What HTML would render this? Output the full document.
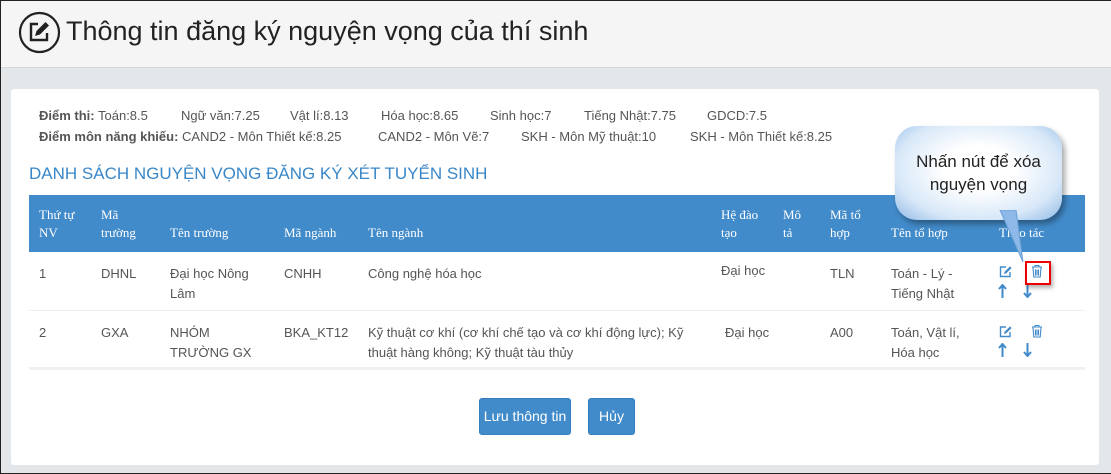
<!DOCTYPE html>
<html><head><meta charset="utf-8"><style>
*{box-sizing:border-box}
body{margin:0;width:1111px;height:474px;overflow:hidden;font-family:"Liberation Sans",sans-serif;font-size:13px;color:#555;background:#e4e7ea;position:relative}
.frame{position:absolute;left:0;top:0;width:1111px;height:474px;border:1px solid #222;border-right:none;pointer-events:none;z-index:10}
.hdr{position:absolute;left:0;top:0;width:1111px;height:68px;background:#f5f5f5;border-bottom:1px solid #d5d8db}
.hdr h1{position:absolute;left:66px;top:16px;margin:0;font-weight:normal;font-size:27px;color:#222}
.card{position:absolute;left:11px;top:89px;width:1088px;height:376px;background:#fff;border-radius:3px}
.t{position:absolute;white-space:nowrap}
.b{font-weight:bold}
table{position:absolute;left:18px;top:106px;width:1056px;border-collapse:collapse}
th{background:#428bca;color:#fff;font-family:"Liberation Serif",serif;font-weight:normal;text-align:left;vertical-align:bottom;font-size:13px;line-height:18px;padding:0 0 10px 10px;height:57px}
td{vertical-align:top;padding:12px 0 0 10px;line-height:20px;height:58px;border-bottom:1px solid #eee;color:#555}
tr:last-child td{border-bottom:3px solid #f0f0f0}
.btn{position:absolute;top:309px;height:37px;background:#428bca;border:1px solid #357ebd;border-radius:3px;color:#fff;font-size:14px;line-height:35px;text-align:center}
.ico{position:absolute;z-index:3}
</style></head><body>
<div class="hdr">
<svg style="position:absolute;left:18px;top:11px" width="43" height="43" viewBox="0 0 43 43"><circle cx="21.5" cy="21.5" r="19.5" fill="none" stroke="#222" stroke-width="2.2"/><path d="M20 13H13v16h16v-7" fill="none" stroke="#222" stroke-width="2.4"/><path d="M17 25l1.5-5 9-9 3.5 3.5-9 9z" fill="#222"/></svg>
<h1>Thông tin đăng ký nguyện vọng của thí sinh</h1></div>
<div class="card">
<div class="t" style="left:28px;top:19px"><span class="b">Điểm thi:</span> Toán:8.5</div>
<div class="t" style="left:170px;top:19px">Ngữ văn:7.25</div>
<div class="t" style="left:279px;top:19px">Vật lí:8.13</div>
<div class="t" style="left:370px;top:19px">Hóa học:8.65</div>
<div class="t" style="left:479px;top:19px">Sinh học:7</div>
<div class="t" style="left:573px;top:19px">Tiếng Nhật:7.75</div>
<div class="t" style="left:696px;top:19px">GDCD:7.5</div>
<div class="t" style="left:28px;top:40px"><span class="b">Điểm môn năng khiếu:</span> CAND2 - Môn Thiết kế:8.25</div>
<div class="t" style="left:367px;top:40px">CAND2 - Môn Vẽ:7</div>
<div class="t" style="left:510px;top:40px">SKH - Môn Mỹ thuật:10</div>
<div class="t" style="left:679px;top:40px">SKH - Môn Thiết kế:8.25</div>
<div class="t" style="left:18px;top:75px;font-size:17px;color:#3a87c8">DANH SÁCH NGUYỆN VỌNG ĐĂNG KÝ XÉT TUYỂN SINH</div>
<table>
<tr><th style="width:62px">Thứ tự<br>NV</th><th style="width:69px">Mã<br>trường</th><th style="width:114px">Tên trường</th><th style="width:84px">Mã ngành</th><th style="width:353px">Tên ngành</th><th style="width:62px">Hệ đào<br>tạo</th><th style="width:47px">Mô<br>tả</th><th style="width:61px">Mã tổ<br>hợp</th><th style="width:108px">Tên tổ hợp</th><th>Thao tác</th></tr>
<tr><td>1</td><td>DHNL</td><td>Đại học Nông<br>Lâm</td><td>CNHH</td><td>Công nghệ hóa học</td><td style="padding-top:9px">Đại học</td><td></td><td>TLN</td><td>Toán - Lý -<br>Tiếng Nhật</td><td></td></tr>
<tr><td>2</td><td>GXA</td><td>NHÓM<br>TRƯỜNG GX</td><td>BKA_KT12</td><td>Kỹ thuật cơ khí (cơ khí chế tạo và cơ khí động lực); Kỹ thuật hàng không; Kỹ thuật tàu thủy</td><td style="padding-left:14px">Đại học</td><td></td><td>A00</td><td>Toán, Vật lí,<br>Hóa học</td><td></td></tr>
</table>
<div class="btn" style="left:468px;width:92px">Lưu thông tin</div>
<div class="btn" style="left:577px;width:47px">Hủy</div>
</div>
<!-- icons rows -->
<svg class="ico" style="left:999px;top:265px" width="14" height="13" viewBox="0 0 14 13"><path d="M7 2H1.5v9.5H11V7" fill="none" stroke="#428bca" stroke-width="1.4"/><path d="M5 9l.6-2.2L11 1.4l1.6 1.6L7.2 8.4z" fill="#428bca"/></svg>
<svg class="ico" style="left:1031px;top:264px" width="12" height="14" viewBox="0 0 12 14"><path d="M1 3h10M4 3V1.5h4V3M2 3.5l.8 9.5h6.4L10 3.5M4.5 5.5v6M6 5.5v6M7.5 5.5v6" fill="none" stroke="#428bca" stroke-width="1.1"/></svg>
<svg class="ico" style="left:998px;top:284px" width="9" height="14" viewBox="0 0 9 14"><path d="M4.5 1v13M1 5l3.5-4L8 5" fill="none" stroke="#428bca" stroke-width="2"/></svg>
<svg class="ico" style="left:1023px;top:284px" width="9" height="14" viewBox="0 0 9 14"><path d="M4.5 0v13M1 9l3.5 4L8 9" fill="none" stroke="#428bca" stroke-width="2"/></svg>
<svg class="ico" style="left:999px;top:325px" width="14" height="13" viewBox="0 0 14 13"><path d="M7 2H1.5v9.5H11V7" fill="none" stroke="#428bca" stroke-width="1.4"/><path d="M5 9l.6-2.2L11 1.4l1.6 1.6L7.2 8.4z" fill="#428bca"/></svg>
<svg class="ico" style="left:1031px;top:324px" width="12" height="14" viewBox="0 0 12 14"><path d="M1 3h10M4 3V1.5h4V3M2 3.5l.8 9.5h6.4L10 3.5M4.5 5.5v6M6 5.5v6M7.5 5.5v6" fill="none" stroke="#428bca" stroke-width="1.1"/></svg>
<svg class="ico" style="left:998px;top:343px" width="9" height="14" viewBox="0 0 9 14"><path d="M4.5 1v13M1 5l3.5-4L8 5" fill="none" stroke="#428bca" stroke-width="2"/></svg>
<svg class="ico" style="left:1023px;top:343px" width="9" height="14" viewBox="0 0 9 14"><path d="M4.5 0v13M1 9l3.5 4L8 9" fill="none" stroke="#428bca" stroke-width="2"/></svg>
<div style="position:absolute;left:1025px;top:261px;width:26px;height:24px;border:2px solid #e00;z-index:6;box-shadow:2px 3px 4px rgba(0,0,0,.3)"></div>
<svg style="position:absolute;left:990px;top:210px;z-index:5" width="40" height="56"><path d="M10 0L33 52L26 0z" fill="#8db8e8" stroke="#6a9fd8"/></svg>
<div style="position:absolute;left:895px;top:126px;width:167px;height:94px;border-radius:22px;background:radial-gradient(ellipse at 50% 45%,#ffffff 30%,#d8e8f8 70%,#8fb9e6 100%);box-shadow:3px 4px 6px rgba(0,0,0,.35);z-index:4;text-align:center;font-size:17px;color:#222;line-height:23px;padding-top:24px">Nhấn nút để xóa<br>nguyện vọng</div>
<div class="frame"></div>
</body></html>
